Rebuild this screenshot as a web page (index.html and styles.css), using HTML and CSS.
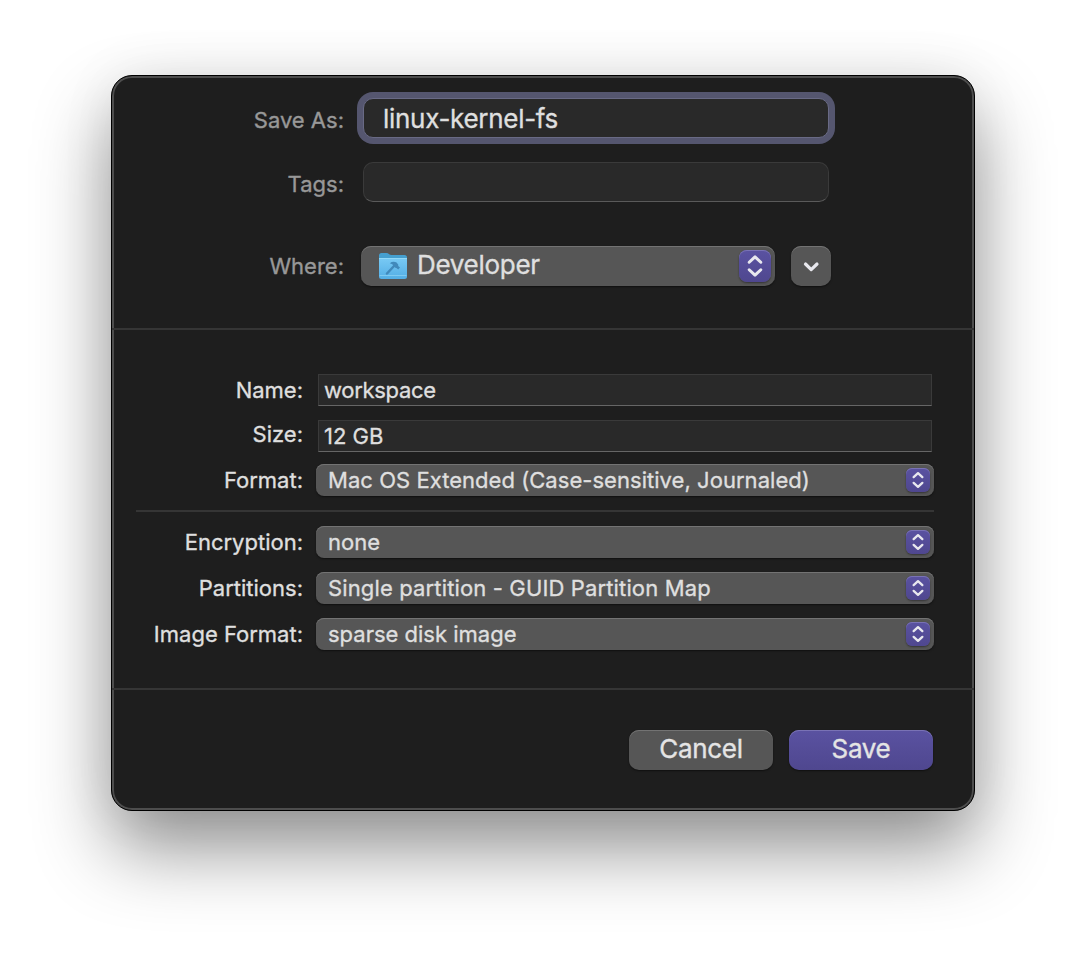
FILE: index.html
```html
<!DOCTYPE html>
<html lang="en">
<head>
<meta charset="utf-8">
<title>Save</title>
<link rel="stylesheet" href="styles.css">
</head>
<body>
<svg class="defs" width="0" height="0" aria-hidden="true">
  <symbol id="updown" viewBox="0 0 34 34">
    <path d="M10.8 13 L17 7.200 L23.2 13 M10.8 21 L17 26.8 L23.2 21"/>
  </symbol>
</svg>
<main class="dialog">
  <section class="location">
    <div class="row row-name"><label class="label">Save As:</label><div class="field focused"><span class="tight">linux-kernel-fs</span></div></div>
    <div class="row row-tags"><label class="label">Tags:</label><div class="field"></div></div>
    <div class="row row-where"><label class="label">Where:</label>
      <div class="popup popup-large">
        <svg class="folder" width="32" height="30" viewBox="0 0 32 30">
          <defs><linearGradient id="front" x1="0" y1="0" x2="0" y2="1"><stop offset="0" stop-color="#78c9f4"/><stop offset="1" stop-color="#53aee5"/></linearGradient></defs>
          <path d="M2 4.5 Q2 2 4.500 2 H9.500 Q11 2 12.200 3.200 Q13 4 14.500 4 H27.500 Q30 4 30 6.500 V12 H2Z" fill="#459fcf"/>
          <path d="M2 7.500 H30 V25.500 Q30 28 27.500 28 H4.500 Q2 28 2 25.500Z" fill="url(#front)"/>
          <path d="M2 7.500 H30" stroke="#92d9f8" stroke-width="1"/>
          <path d="M2.500 24.500 H29.500" stroke="#89cff3" stroke-width=".8"/>
          <path d="M10 22.500 L17.500 14.500" stroke="#4189bb" stroke-width="2.500" stroke-linecap="round"/>
          <path d="M12.800 12.300 Q16 9.800 19.600 11.600 L21.300 13.800 L21.200 15 L23 16.600 L21.200 18.600 L19.400 17 L18.300 16.800 L16.500 14.800 Q16 12.800 12.800 12.300Z" fill="#4189bb"/>
        </svg>
        <span class="tight raised">Developer</span>
        <span class="stepper"><svg class="glyph" width="32" height="32"><use href="#updown"/></svg></span>
      </div>
      <div class="expand"><svg class="glyph" width="40" height="40" viewBox="0 0 40 40"><path d="M14.500 18 L20.200 23.600 L26 18"/></svg></div>
    </div>
  </section>
  <section class="options">
    <div class="row"><label class="label">Name:</label><div class="box"><span class="tight">workspace</span></div></div>
    <div class="row"><label class="label lifted">Size:</label><div class="box"><span>12 GB</span></div></div>
    <div class="row row-format"><label class="label">Format:</label><div class="popup"><span class="loose">Mac OS Extended (Case-sensitive, Journaled)</span><span class="stepper"><svg class="glyph" width="24" height="24"><use href="#updown"/></svg></span></div></div>
    <hr class="rule">
    <div class="row"><label class="label">Encryption:</label><div class="popup"><span>none</span><span class="stepper"><svg class="glyph" width="24" height="24"><use href="#updown"/></svg></span></div></div>
    <div class="row"><label class="label">Partitions:</label><div class="popup"><span class="looser">Single partition - GUID Partition Map</span><span class="stepper"><svg class="glyph" width="24" height="24"><use href="#updown"/></svg></span></div></div>
    <div class="row"><label class="label">Image Format:</label><div class="popup"><span>sparse disk image</span><span class="stepper"><svg class="glyph" width="24" height="24"><use href="#updown"/></svg></span></div></div>
  </section>
  <footer class="actions"><button class="btn"><span class="tight">Cancel</span></button><button class="btn primary"><span class="tight">Save</span></button></footer>
</main>
</body>
</html>
```
FILE: styles.css
```css
* { box-sizing: border-box; }
body {
  margin: 0;
  padding: 75px 111px;
  width: 1086px;
  height: 958px;
  overflow: hidden;
  background: #fff;
  font-family: Inter, "Liberation Sans", sans-serif;
  font-size: 22px;
  color: #dfdfdf;
  -webkit-text-stroke: 0.35px currentColor;
}
.defs { display: block; }
.tight { letter-spacing: -0.3px; }
.loose { letter-spacing: 0.04px; }
.looser { letter-spacing: 0.14px; }
.raised { padding-bottom: 3px; }
.dialog {
  width: 864px;
  height: 736px;
  border: 1px solid #000;
  border-radius: 21px;
  background: #1e1e1e;
  box-shadow: inset 0 0 0 2px #4d4d4d, 0 38px 76px rgba(0, 0, 0, .43), 0 0 60px rgba(0, 0, 0, .06);
}
.row { display: flex; height: 32px; }
.label {
  display: flex;
  align-items: center;
  justify-content: flex-end;
  flex: none;
}
.location {
  height: 254px;
  padding-top: 22px;
  border-bottom: 2px solid #353535;
}
.location .row { height: 40px; }
.location .label { width: 232px; margin-right: 19px; color: #989898; padding-top: 4px; }
.row-tags { margin-top: 24px; }
.location .row-where { margin-top: 44px; }
.location .row-where .label { margin-right: 17px; padding-top: 0; }
.field {
  width: 466px;
  height: 40px;
  border: 1px solid #3a3a3a;
  border-bottom-color: #5a5a5a;
  border-radius: 10px;
  background: #292929;
  padding: 0 19px;
  display: flex;
  align-items: center;
  font-size: 26px;
}
.focused { border-color: #696a85; box-shadow: 0 0 0 6px #55566f; }
.popup {
  width: 618px;
  height: 32px;
  border-radius: 8px;
  background: #565656;
  box-shadow: inset 0 1px 0 #737373, 0 1px 2px rgba(0, 0, 0, .5);
  display: flex;
  align-items: center;
  padding: 0 4px 0 12px;
}
.popup .stepper { margin-left: auto; }
.stepper {
  width: 24px;
  height: 24px;
  border-radius: 6px;
  background: linear-gradient(#5a52a1, #4f478f);
  box-shadow: inset 0 1px 0 #7972b5, 0 1px 2px rgba(0, 0, 0, .4);
  display: flex;
}
.glyph { display: block; fill: none; stroke: #e8e8ee; stroke-width: 3.2; stroke-linecap: round; stroke-linejoin: round; }
.popup-large { width: 414px; height: 40px; border-radius: 10px; padding: 0 4px 0 16px; font-size: 26px; }
.popup-large .stepper { width: 32px; height: 32px; border-radius: 8px; }
.folder { margin-right: 8px; }
.expand {
  width: 40px;
  height: 40px;
  margin-left: 16px;
  border-radius: 10px;
  background: #565656;
  box-shadow: inset 0 1px 0 #737373, 0 1px 2px rgba(0, 0, 0, .5);
}
.options {
  height: 360px;
  padding: 44px 40px 0 24px;
  border-bottom: 2px solid #353535;
}
.options .label { width: 167px; margin-right: 13px; }
.options .row { margin-bottom: 14px; }
.options .row-format { margin: -2px 0 14px; }
.box {
  width: 614px;
  height: 32px;
  margin-left: 2px;
  border: 1px solid #3a3a3a;
  border-bottom-color: #666;
  background: #292929;
  padding: 0 5px;
  display: flex;
  align-items: center;
}
.options .lifted { padding-bottom: 4px; }
.rule { height: 2px; margin: 0 0 14px; border: 0; background: #353535; }
.actions { display: flex; justify-content: flex-end; gap: 16px; padding: 40px 41px 0 0; }
.btn {
  width: 144px;
  height: 40px;
  border: 0;
  border-radius: 10px;
  background: #565656;
  box-shadow: inset 0 1px 0 #737373, 0 1px 2px rgba(0, 0, 0, .5);
  font: inherit;
  font-size: 26px;
  color: #e4e4e4;
  padding: 0 0 4px;
  -webkit-text-stroke: inherit;
}
.primary { background: linear-gradient(#5a52a1, #4f478f); box-shadow: inset 0 1px 0 #7972b5, 0 1px 2px rgba(0, 0, 0, .5); }
```
